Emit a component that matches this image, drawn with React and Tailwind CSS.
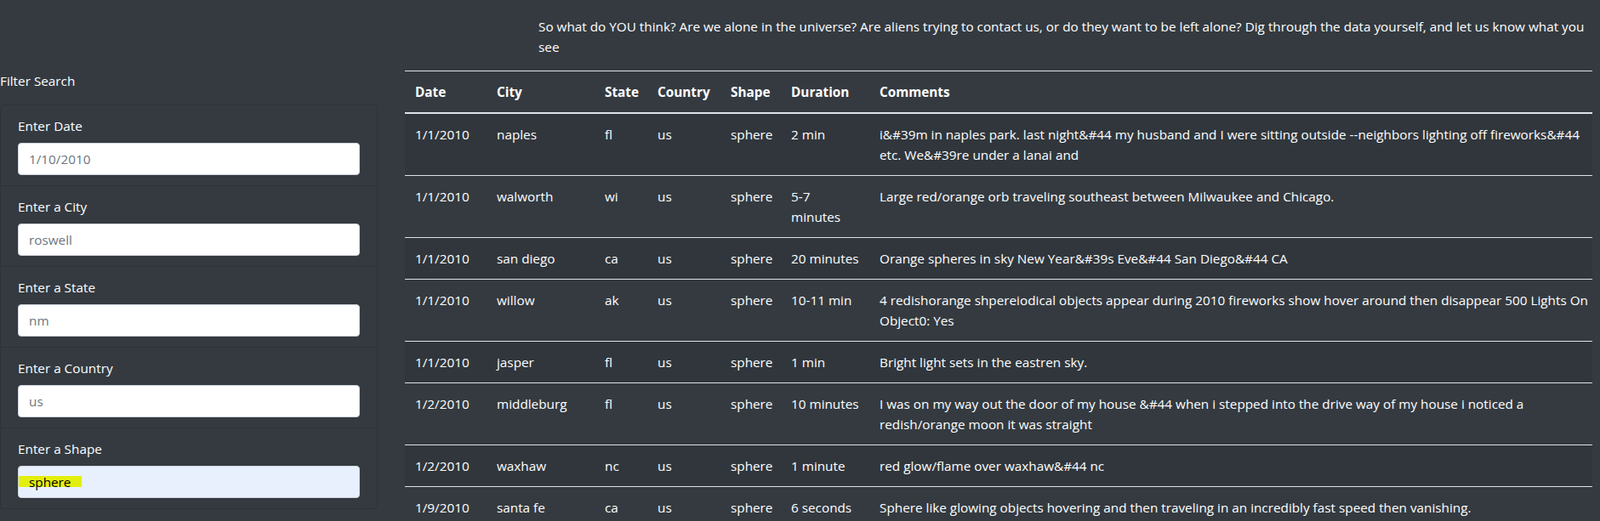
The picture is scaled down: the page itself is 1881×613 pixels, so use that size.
const FILTERS = [
  { id: 'datetime', label: 'Enter Date', placeholder: '1/10/2010' },
  { id: 'city', label: 'Enter a City', placeholder: 'roswell' },
  { id: 'state', label: 'Enter a State', placeholder: 'nm' },
  { id: 'country', label: 'Enter a Country', placeholder: 'us' },
  { id: 'shape', label: 'Enter a Shape', value: 'sphere' },
]

const COLUMNS = [
  { name: 'Date', width: 'w-[96px]' },
  { name: 'City', width: 'w-[127px]' },
  { name: 'State', width: 'w-[62px]' },
  { name: 'Country', width: 'w-[86px]' },
  { name: 'Shape', width: 'w-[71px]' },
  { name: 'Duration', width: 'w-[104px]' },
  { name: 'Comments', width: '' },
]

// comments y duración partidos a mano igual que en la captura
const SIGHTINGS = [
  ['1/1/2010', 'naples', 'fl', 'us', 'sphere', ['2 min'], [
    'i&#39m in naples park. last night&#44 my husband and I were sitting outside --neighbors lighting off fireworks&#44',
    'etc. We&#39re under a lanai and',
  ]],
  ['1/1/2010', 'walworth', 'wi', 'us', 'sphere', ['5-7', 'minutes'], [
    'Large red/orange orb traveling southeast between Milwaukee and Chicago.',
  ]],
  ['1/1/2010', 'san diego', 'ca', 'us', 'sphere', ['20 minutes'], [
    'Orange spheres in sky New Year&#39s Eve&#44 San Diego&#44 CA',
  ]],
  ['1/1/2010', 'willow', 'ak', 'us', 'sphere', ['10-11 min'], [
    '4 redishorange shpereiodical objects appear during 2010 fireworks show hover around then disappear 500 Lights On',
    'Object0: Yes',
  ]],
  ['1/1/2010', 'jasper', 'fl', 'us', 'sphere', ['1 min'], [
    'Bright light sets in the eastren sky.',
  ]],
  ['1/2/2010', 'middleburg', 'fl', 'us', 'sphere', ['10 minutes'], [
    'I was on my way out the door of my house &#44 when i stepped into the drive way of my house i noticed a',
    'redish/orange moon it was straight',
  ]],
  ['1/2/2010', 'waxhaw', 'nc', 'us', 'sphere', ['1 minute'], [
    'red glow/flame over waxhaw&#44 nc',
  ]],
  ['1/9/2010', 'santa fe', 'ca', 'us', 'sphere', ['6 seconds'], [
    'Sphere like glowing objects hovering and then traveling in an incredibly fast speed then vanishing.',
  ]],
]

function Lines({ lines }) {
  return lines.map((line, i) => (
    <span key={i} className="block whitespace-nowrap">
      {line}
    </span>
  ))
}

function FilterItem({ filter, first, last }) {
  return (
    <li
      className={`border border-[#2e3338] px-5 py-3 ${first ? 'rounded-t' : 'border-t-0'} ${
        last ? 'rounded-b' : ''
      }`}
    >
      <label htmlFor={filter.id} className="mb-2 block leading-6">
        {filter.label}
      </label>
      {filter.value ? (
        // autocompletado de Chrome + subrayado amarillo de la captura
        <div className="relative h-[38px] w-full rounded border border-[#ced4da] bg-[#e8f0fe] px-3 leading-[36px] text-black">
          <span className="absolute left-0 top-[11px] h-[13px] w-[74px] bg-[#e3ef0c]" />
          <span className="relative">{filter.value}</span>
        </div>
      ) : (
        <input
          id={filter.id}
          type="text"
          placeholder={filter.placeholder}
          className="block h-[38px] w-full rounded border border-[#ced4da] bg-white px-3 text-[15.3px] text-[#495057] outline-none placeholder:text-[#6c757d]"
        />
      )}
    </li>
  )
}

export default function App() {
  return (
    <div className="flex min-h-[613px] w-full bg-[#343a40] font-['Open_Sans',sans-serif] text-[15.3px] leading-6 text-white">
      {/* Filtros */}
      <aside className="w-[444px] shrink-0 pt-[83px]">
        <p className="mb-4">Filter Search</p>
        <ul>
          {FILTERS.map((filter, i) => (
            <FilterItem
              key={filter.id}
              filter={filter}
              first={i === 0}
              last={i === FILTERS.length - 1}
            />
          ))}
        </ul>
      </aside>

      {/* Texto + tabla */}
      <main className="ml-8 w-[1396px] shrink-0">
        <p className="mb-4 ml-[157px] pt-[19px]">
          <span className="block whitespace-nowrap">
            So what do YOU think? Are we alone in the universe? Are aliens trying to contact us, or do they want to be left alone? Dig through the data yourself, and let us know what you
          </span>
          <span className="block">see</span>
        </p>

        <table className="w-full table-fixed border-collapse text-left">
          <thead>
            <tr>
              {COLUMNS.map((col) => (
                <th
                  key={col.name}
                  className={`${col.width} border-t border-b-2 border-[#dee2e6] p-3 align-bottom font-bold`}
                >
                  {col.name}
                </th>
              ))}
            </tr>
          </thead>
          <tbody>
            {SIGHTINGS.map((row, i) => (
              <tr key={i} className={i % 2 === 0 ? 'bg-[#30363c]' : ''}>
                {row.slice(0, 5).map((cell, j) => (
                  <td key={j} className="border-t border-[#dee2e6] p-3 align-top">
                    {cell}
                  </td>
                ))}
                <td className="border-t border-[#dee2e6] p-3 align-top">
                  <Lines lines={row[5]} />
                </td>
                <td className="border-t border-[#dee2e6] p-3 align-top">
                  <Lines lines={row[6]} />
                </td>
              </tr>
            ))}
          </tbody>
        </table>
      </main>
    </div>
  )
}
